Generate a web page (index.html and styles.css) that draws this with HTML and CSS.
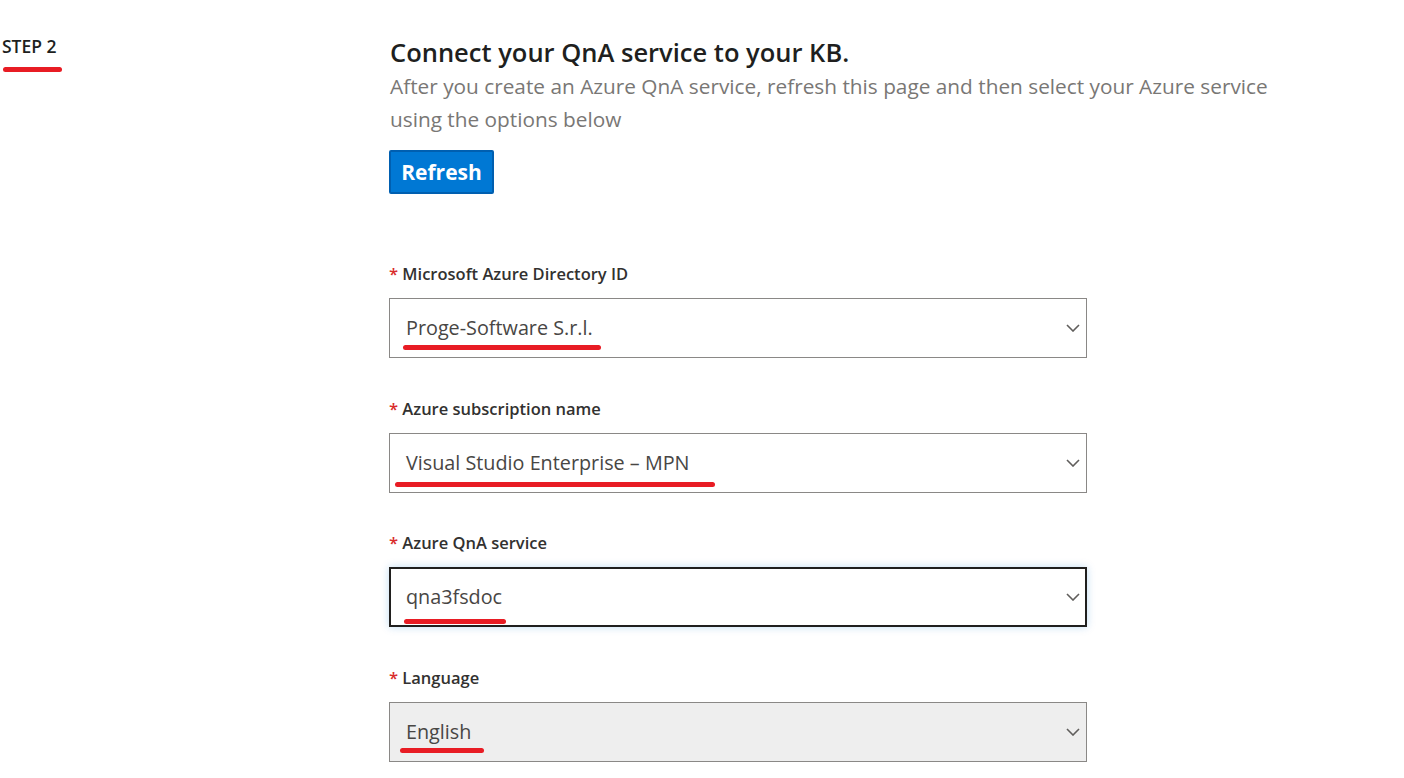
FILE: index.html
```html
<!DOCTYPE html>
<html lang="en">
<head>
<meta charset="utf-8">
<title>Connect your QnA service</title>
<link rel="stylesheet" href="styles.css">
</head>
<body>
<div class="page">
  <div class="step-col">
    <div class="step">STEP 2<span class="mark mark-step"></span></div>
  </div>
  <div class="main">
    <h1 class="title">Connect your QnA service to your KB.</h1>
    <p class="subtitle">After you create an Azure QnA service, refresh this page and then select your Azure service using the options below</p>
    <button class="btn" type="button">Refresh</button>

    <div class="fields">
      <div class="field">
        <div class="label"><span class="req">*</span> Microsoft Azure Directory ID</div>
        <div class="select">
          <span class="value">Proge-Software S.r.l.</span>
          <svg class="chev" width="14" height="8" viewBox="0 0 14 8"><path d="M1 1 L7 7 L13 1" fill="none" stroke="#605e5c" stroke-width="1.6"/></svg>
          <span class="mark mark-1"></span>
        </div>
      </div>
      <div class="field">
        <div class="label"><span class="req">*</span> Azure subscription name</div>
        <div class="select">
          <span class="value">Visual Studio Enterprise – MPN</span>
          <svg class="chev" width="14" height="8" viewBox="0 0 14 8"><path d="M1 1 L7 7 L13 1" fill="none" stroke="#605e5c" stroke-width="1.6"/></svg>
          <span class="mark mark-2"></span>
        </div>
      </div>
      <div class="field">
        <div class="label"><span class="req">*</span> Azure QnA service</div>
        <div class="select focused">
          <span class="value">qna3fsdoc</span>
          <svg class="chev" width="14" height="8" viewBox="0 0 14 8"><path d="M1 1 L7 7 L13 1" fill="none" stroke="#605e5c" stroke-width="1.6"/></svg>
          <span class="mark mark-3"></span>
        </div>
      </div>
      <div class="field">
        <div class="label"><span class="req">*</span> Language</div>
        <div class="select disabled">
          <span class="value">English</span>
          <svg class="chev" width="14" height="8" viewBox="0 0 14 8"><path d="M1 1 L7 7 L13 1" fill="none" stroke="#605e5c" stroke-width="1.6"/></svg>
          <span class="mark mark-4"></span>
        </div>
      </div>
    </div>
  </div>
</div>
</body>
</html>
```
FILE: styles.css
```css
* { box-sizing: border-box; }
html, body { margin: 0; padding: 0; background: #ffffff; }
body {
  font-family: "Open Sans", "Noto Sans", "Liberation Sans", sans-serif;
  color: #323130;
  width: 1404px;
  height: 778px;
  overflow: hidden;
}
.page { display: flex; }
.step-col { width: 389px; flex: none; padding-top: 34px; padding-left: 2px; }
.step {
  position: relative;
  font-size: 17.5px;
  font-weight: 600;
  line-height: 24px;
  color: #201f1e;
}
.mark {
  position: absolute;
  display: block;
  background: #e81c24;
  border-radius: 3px;
  height: 5px;
}
.mark-step { left: 1px; top: 33px; width: 59px; }

.main { width: 900px; padding-top: 36px; padding-left: 1px; }
.title {
  margin: 0;
  font-size: 25.5px;
  font-weight: 600;
  line-height: 32px;
  color: #201f1e;
}
.subtitle {
  margin: 2px 0 0 0;
  font-size: 20.8px;
  line-height: 33px;
  color: #797775;
  width: 900px;
}
.btn {
  margin-top: 14px;
  display: block;
  height: 44px;
  width: 105px;
  margin-left: -1px;
  background: #0078d4;
  border: 2px solid #005fb0;
  border-radius: 2px;
  color: #ffffff;
  font-family: inherit;
  font-size: 21px;
  font-weight: 700;
  padding: 0;
}
.fields { margin-top: 68px; margin-left: -1px; display: flex; flex-direction: column; gap: 38.5px; }
.field { display: flex; flex-direction: column; gap: 12px; }
.label {
  font-size: 16.5px;
  font-weight: 600;
  line-height: 24px;
  color: #323130;
}
.req { color: #d92b2b; }
.select {
  position: relative;
  width: 698px;
  height: 60px;
  border: 1px solid #8a8886;
  background: #ffffff;
  display: flex;
  align-items: center;
  justify-content: space-between;
  padding: 0 6px 0 16px;
}
.select.focused {
  border: 2px solid #201f1e;
  padding-left: 15px;
  padding-right: 5px;
  box-shadow: 0 0 8px rgba(0, 120, 212, 0.25);
}
.select.disabled { background: #eeeeee; }
.value {
  font-size: 19.8px;
  line-height: 28px;
  color: #484644;
}
.chev { flex: none; }
.mark-1 { left: 13px; top: 46px; width: 198px; }
.mark-2 { left: 5px; top: 48px; width: 320px; }
.mark-3 { left: 13px; top: 50px; width: 102px; }
.mark-4 { left: 10px; top: 45px; width: 84px; }
```
